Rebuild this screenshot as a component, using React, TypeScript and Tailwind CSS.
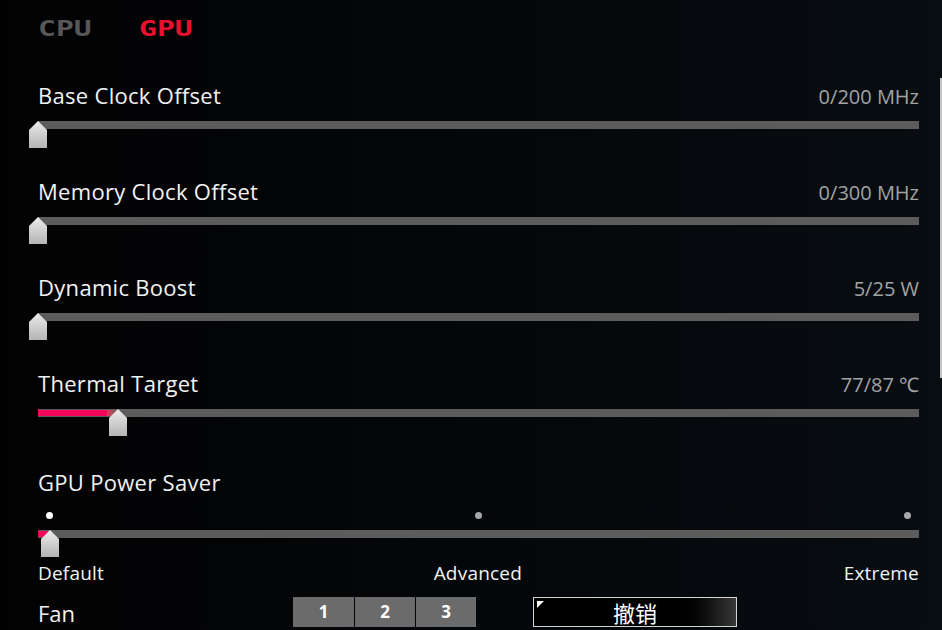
import React from 'react';

const sans = "font-['Open_Sans','Noto_Sans',sans-serif]";

function Thumb({ pct }: { pct: number }) {
  return (
    <svg
      className="absolute top-0 w-[18px] h-[27px]"
      style={{ left: `calc(${pct}% - 9px)` }}
      viewBox="0 0 18 27"
    >
      <defs>
        <linearGradient id="thumbGrad" x1="0" y1="0" x2="0" y2="1">
          <stop offset="0" stopColor="#ececec" />
          <stop offset="1" stopColor="#b4b4b4" />
        </linearGradient>
      </defs>
      <polygon points="9,0 18,9 18,27 0,27 0,9" fill="url(#thumbGrad)" />
    </svg>
  );
}

function Track({ pct, fill }: { pct: number; fill?: boolean }) {
  return (
    <div className="relative h-2 bg-[#5c5c5c]">
      {fill && (
        <div
          className="absolute left-0 top-[1px] h-[6px] bg-gradient-to-r from-[#f2065a] via-[#f2065a] via-85% to-[#5c5c5c]"
          style={{ width: `${pct}%` }}
        />
      )}
      <Thumb pct={pct} />
    </div>
  );
}

interface SliderRowProps {
  label: string;
  value: string;
  pct: number;
  fill?: boolean;
}

function SliderRow({ label, value, pct, fill }: SliderRowProps) {
  return (
    <div className="h-[96px]">
      <div className="flex items-baseline justify-between h-[28px] leading-[26px]">
        <span className="text-[22px] tracking-[0.3px] text-[#f2f2f2]">{label}</span>
        <span className="text-[20px] text-[#a3a3a3]">{value}</span>
      </div>
      <div className="mt-[11px]">
        <Track pct={pct} fill={fill} />
      </div>
    </div>
  );
}

export default function App() {
  return (
    <div
      className={`relative w-[942px] h-[630px] overflow-hidden bg-gradient-to-r from-[#020203] via-[#04070a] to-[#080d11] ${sans}`}
    >
      {/* scrollbar */}
      <div className="absolute right-0 top-[78px] w-[2px] h-[300px] bg-[#c4c4c4]" />

      {/* Tabs */}
      <div className="flex items-center h-[60px] pl-[38px] pb-[2px] font-['DejaVu_Sans_Mono',monospace] font-bold text-[22px] leading-none">
        <span className="inline-block w-[101px] origin-left scale-x-135 text-[#575757]">CPU</span>
        <span className="inline-block origin-left scale-x-135 text-[#e8112d]">GPU</span>
      </div>

      <div className="pl-[38px] pr-[23px] pt-[22px]">
        <SliderRow label="Base Clock Offset" value="0/200 MHz" pct={0} />
        <SliderRow label="Memory Clock Offset" value="0/300 MHz" pct={0} />
        <SliderRow label="Dynamic Boost" value="5/25 W" pct={0} />
        <SliderRow label="Thermal Target" value="77/87 ℃" pct={9.1} fill />

        {/* GPU Power Saver */}
        <div className="mt-[3px]">
          <div className="h-[28px] leading-[26px] text-[22px] tracking-[0.3px] text-[#f2f2f2]">GPU Power Saver</div>
          <div className="flex justify-between px-[8px] mt-[15px] h-[7px]">
            <span className="w-[7px] h-[7px] rounded-full bg-white" />
            <span className="w-[7px] h-[7px] rounded-full bg-[#a8a8a8]" />
            <span className="w-[7px] h-[7px] rounded-full bg-[#a8a8a8]" />
          </div>
          <div className="mt-[11px]">
            <Track pct={1.4} fill />
          </div>
          <div className="flex justify-between mt-[23px] h-[24px] leading-[24px] text-[19px] tracking-[0.2px] text-[#f2f2f2]">
            <span>Default</span>
            <span className="pl-[8px]">Advanced</span>
            <span>Extreme</span>
          </div>
        </div>

        {/* Fan */}
        <div className="flex mt-[12px]">
          <div className="w-[255px]">
            <span className="block mt-[3px] h-[28px] leading-[26px] text-[22px] text-[#f2f2f2]">Fan</span>
          </div>
          <div className="flex gap-px h-[30px]">
            <button className="w-[61px] bg-[#6b6b6b] text-white font-bold text-[17px]">1</button>
            <button className="w-[60px] bg-[#6b6b6b] text-white font-bold text-[17px]">2</button>
            <button className="w-[60px] bg-[#6b6b6b] text-white font-bold text-[17px]">3</button>
          </div>
          <button className="relative ml-[57px] w-[204px] h-[30px] border border-[#d4d4d4] bg-gradient-to-r from-black via-black via-70% to-[#383838] text-white text-[22px] leading-[28px] font-['Noto_Sans_CJK_SC',sans-serif]">
            <span className="absolute left-[3px] top-[3px] w-0 h-0 border-t-[7px] border-r-[7px] border-t-white border-r-transparent" />
            撤销
          </button>
        </div>
      </div>
    </div>
  );
}
